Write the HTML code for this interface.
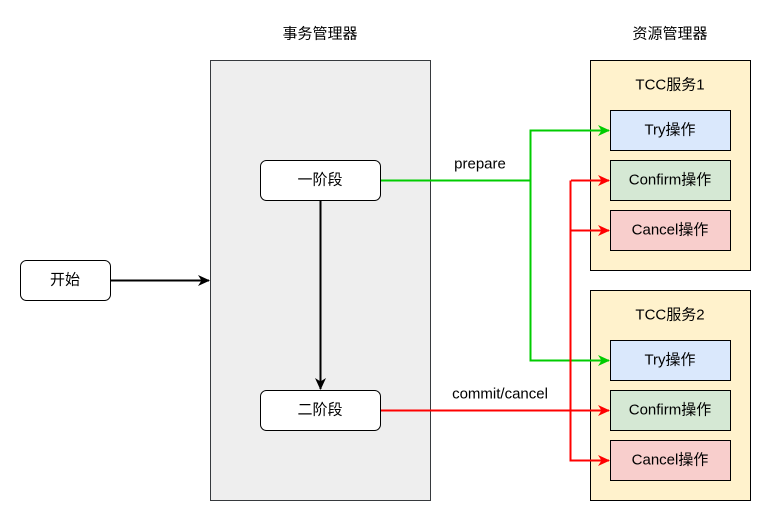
<!DOCTYPE html>
<html><head><meta charset="utf-8"><style>
html,body{margin:0;padding:0;background:#fff;}
svg{display:block;}
text{font-family:"Liberation Sans","Noto Sans CJK SC",sans-serif;font-size:15px;fill:#000;text-anchor:middle;dominant-baseline:central;}
</style></head><body>
<svg width="771" height="521" viewBox="0 0 771 521" xmlns="http://www.w3.org/2000/svg">
<defs>
<marker id="ak" markerWidth="12" markerHeight="12" refX="11" refY="6" orient="auto" markerUnits="userSpaceOnUse"><path d="M0,0.5 L12,6 L0,11.5 L3.5,6 Z" fill="#000"/></marker>
<marker id="ag" markerWidth="12" markerHeight="12" refX="11" refY="6" orient="auto" markerUnits="userSpaceOnUse"><path d="M0,0.5 L12,6 L0,11.5 L3.5,6 Z" fill="#00cc00"/></marker>
<marker id="ar" markerWidth="12" markerHeight="12" refX="11" refY="6" orient="auto" markerUnits="userSpaceOnUse"><path d="M0,0.5 L12,6 L0,11.5 L3.5,6 Z" fill="#ff0000"/></marker>
</defs>
<text x="320" y="34">事务管理器</text>
<text x="670" y="34">资源管理器</text>
<rect x="210.5" y="60.5" width="220" height="440" fill="#eeeeee" stroke="#36393d"/>
<rect x="590.5" y="60.5" width="160" height="210" fill="#fff2cc" stroke="#000"/>
<rect x="590.5" y="290.5" width="160" height="210" fill="#fff2cc" stroke="#000"/>
<text x="670" y="85">TCC服务1</text>
<text x="670" y="315">TCC服务2</text>
<rect x="20.5" y="260.5" width="90" height="40" rx="6" fill="#fff" stroke="#000"/>
<text x="65" y="280">开始</text>
<rect x="260.5" y="160.5" width="120" height="40" rx="6" fill="#fff" stroke="#000"/>
<text x="320" y="180">一阶段</text>
<rect x="260.5" y="390.5" width="120" height="40" rx="6" fill="#fff" stroke="#000"/>
<text x="320" y="410">二阶段</text>
<g stroke="#000">
<rect x="610.5" y="110.5" width="120" height="40" fill="#dae8fc"/>
<rect x="610.5" y="160.5" width="120" height="40" fill="#d5e8d4"/>
<rect x="610.5" y="210.5" width="120" height="40" fill="#f8cecc"/>
<rect x="610.5" y="340.5" width="120" height="40" fill="#dae8fc"/>
<rect x="610.5" y="390.5" width="120" height="40" fill="#d5e8d4"/>
<rect x="610.5" y="440.5" width="120" height="40" fill="#f8cecc"/>
</g>
<text x="670" y="130">Try操作</text>
<text x="670" y="180">Confirm操作</text>
<text x="670" y="230">Cancel操作</text>
<text x="670" y="360">Try操作</text>
<text x="670" y="410">Confirm操作</text>
<text x="670" y="460">Cancel操作</text>
<g fill="none" stroke-width="2">
<path d="M110,280.5 H209" stroke="#000" marker-end="url(#ak)"/>
<path d="M320.5,201 V389" stroke="#000" marker-end="url(#ak)"/>
<path d="M381,180.5 H530.5 V130.5 H609" stroke="#00cc00" marker-end="url(#ag)"/>
<path d="M530.5,180.5 V360.5 H609" stroke="#00cc00" marker-end="url(#ag)"/>
<path d="M571,180.5 H609" stroke="#ff0000" marker-end="url(#ar)"/>
<path d="M570.5,180.5 V460.5 H609" stroke="#ff0000" marker-end="url(#ar)"/>
<path d="M571,230.5 H609" stroke="#ff0000" marker-end="url(#ar)"/>
<path d="M381,410.5 H609" stroke="#ff0000" marker-end="url(#ar)"/>
</g>
<text x="480" y="164">prepare</text>
<text x="500" y="394">commit/cancel</text>
</svg>
</body></html>
